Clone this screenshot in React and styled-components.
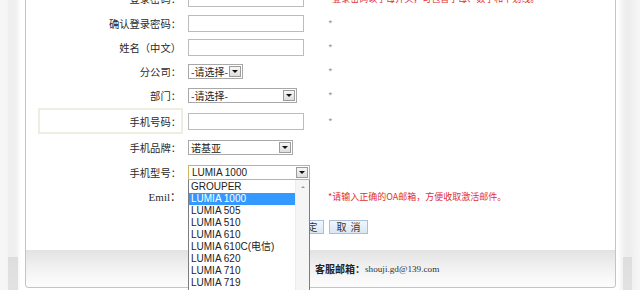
import React from 'react';
import styled, { createGlobalStyle, css } from 'styled-components';

const GlobalStyle = createGlobalStyle`
  html, body { margin: 0; padding: 0; background: #fff; }
  body { font-family: "Noto Sans CJK SC", "Liberation Sans", sans-serif; }
`;

const Page = styled.div`
  width: 640px;
  height: 290px;
  overflow: hidden;
  position: relative;
  background:
    linear-gradient(#dedede, #e2e2e2) 8px 257px / 10px 33px no-repeat,
    linear-gradient(#dedede, #e2e2e2) 623px 257px / 9px 33px no-repeat,
    linear-gradient(to right, #f6f6f6 0, #f6f6f6 7px, #eeeeee 9px, #f0f0f0 16px, #fff 21px, #fff 618px, #f3f3f3 622px, #ececec 628px, #f2f2f2 634px, #f7f7f7 640px);
`;

const Panel = styled.div`
  margin: -14px 0 0 25px;
  width: 589px;
  border: 1px solid #c4c4c4;
  border-top: none;
  border-radius: 0 0 4px 4px;
  background: #fff;
`;

const Form = styled.div`
  padding-left: 12px;
`;

const Row = styled.div`
  display: flex;
  align-items: center;
  height: ${p => p.$h || 24}px;
`;

const Label = styled.div`
  width: 145px;
  height: 26px;
  box-sizing: border-box;
  border: 2px solid transparent;
  display: flex;
  align-items: center;
  justify-content: flex-end;
  font-size: 10.3px;
  color: #2a2a2a;
  white-space: nowrap;
  ${p => p.$boxed && css`
    border-color: #eeeee0;
  `}
  ${p => p.$serif && css`
    font-family: "Liberation Serif", "Noto Sans CJK SC", serif;
    font-size: 11px;
  `}
`;

const Field = styled.div`
  width: 138px;
  box-sizing: border-box;
  padding-left: 5px;
  display: flex;
  align-items: center;
  position: relative;
`;

const Hint = styled.div`
  padding-left: 7px;
  font-size: ${p => (p.$red ? 9 : 10)}px;
  color: ${p => (p.$red ? '#e03030' : '#9a9a9a')};
  white-space: nowrap;
`;

const Input = styled.div`
  width: 116px;
  height: 17px;
  box-sizing: border-box;
  border: 1px solid #bcbcbc;
  background: #fff;
`;

const SelectBox = styled.div`
  width: ${p => p.$w}px;
  height: 15px;
  box-sizing: border-box;
  border: 1px solid ${p => (p.$focus ? '#d2b163' : '#a8a8a8')};
  background: #fff;
  display: flex;
  align-items: center;
  justify-content: space-between;
  padding-left: ${p => (p.$latin ? 3 : 2)}px;
  font-size: 10px;
  font-family: ${p => (p.$latin ? '"Liberation Sans", "Noto Sans CJK SC", sans-serif' : '"Noto Sans CJK SC", sans-serif')};
  color: #222;
  white-space: nowrap;
`;

const Arrow = styled.span`
  width: 12px;
  height: 11px;
  box-sizing: border-box;
  margin-right: 1px;
  border: 1px solid #9c9c9c;
  background: linear-gradient(#f6f6f6, #dedede);
  display: flex;
  align-items: center;
  justify-content: center;
  flex-shrink: 0;
  &::after {
    content: "";
    border-left: 3px solid transparent;
    border-right: 3px solid transparent;
    border-top: 3px solid #111;
  }
`;

const Select = ({ w, children, focus, latin }) => (
  <SelectBox $w={w} $focus={focus} $latin={latin}>
    <span>{children}</span>
    <Arrow />
  </SelectBox>
);

const List = styled.div`
  position: absolute;
  top: 100%;
  left: 5px;
  width: 122px;
  box-sizing: border-box;
  border: 1px solid #7d7d7d;
  border-top: none;
  background: #fff;
  display: flex;
  z-index: 10;
`;

const Items = styled.div`
  flex: 1;
  padding-top: 1px;
`;

const Item = styled.div`
  height: 12px;
  line-height: 12px;
  padding-left: 2px;
  font-family: "Liberation Sans", "Noto Sans CJK SC", sans-serif;
  font-size: 10px;
  color: #222;
  white-space: nowrap;
  ${p => p.$active && css`
    background: #3399ff;
    color: #fff;
  `}
`;

const Scroll = styled.div`
  width: 13px;
  background: #f5f5f5;
  border-left: 1px solid #ececec;
  display: flex;
  justify-content: center;
  padding-top: 6px;
  &::before {
    content: "";
    height: 0;
    border-left: 2px solid transparent;
    border-right: 2px solid transparent;
    border-bottom: 2px solid #9a9a9a;
  }
`;

const ButtonRow = styled.div`
  height: 42px;
  box-sizing: border-box;
  padding: 12px 0 0 249px;
  display: flex;
  gap: 5px;
  align-items: flex-start;
`;

const Button = styled.button`
  width: ${p => p.$w}px;
  height: 14px;
  padding: 0;
  border: 1px solid #a9bfd6;
  background: linear-gradient(#f1f6fc, #d9e6f3);
  font-family: "Noto Sans CJK SC", sans-serif;
  font-size: 10px;
  line-height: 12px;
  letter-spacing: 4px;
  text-indent: 4px;
  color: #333;
`;

const Footer = styled.div`
  height: 37px;
  box-sizing: border-box;
  border-radius: 0 0 4px 4px;
  background: linear-gradient(#e2e2e2, #efefef 40%, #f9f9f9 80%, #fcfcfc);
  display: flex;
  align-items: center;
  padding-left: 289px;
  font-size: 10px;
  color: #222;
`;

const FooterKey = styled.span`
  font-weight: bold;
`;

const FooterMail = styled.span`
  font-family: "Liberation Serif", serif;
  font-size: 9.2px;
  color: #333;
`;

const models = [
  'GROUPER', 'LUMIA 1000', 'LUMIA 505', 'LUMIA 510', 'LUMIA 610',
  'LUMIA 610C(电信)', 'LUMIA 620', 'LUMIA 710', 'LUMIA 719', 'LUMIA 720',
];

export default function App() {
  return (
    <Page>
      <GlobalStyle />
      <Panel>
        <Form>
          <Row $h={25}>
            <Label>登录密码：</Label>
            <Field><Input /></Field>
            <Hint $red>*登录密码以字母开头，可包含字母、数字和下划线。</Hint>
          </Row>
          <Row>
            <Label>确认登录密码：</Label>
            <Field><Input /></Field>
            <Hint>*</Hint>
          </Row>
          <Row>
            <Label>姓名（中文）</Label>
            <Field><Input /></Field>
            <Hint>*</Hint>
          </Row>
          <Row>
            <Label>分公司：</Label>
            <Field><Select w={55}>-请选择-</Select></Field>
            <Hint>*</Hint>
          </Row>
          <Row>
            <Label>部门：</Label>
            <Field><Select w={109}>-请选择-</Select></Field>
            <Hint>*</Hint>
          </Row>
          <Row $h={28}>
            <Label $boxed>手机号码：</Label>
            <Field><Input /></Field>
            <Hint>*</Hint>
          </Row>
          <Row $h={25}>
            <Label>手机品牌：</Label>
            <Field><Select w={105}>诺基亚</Select></Field>
          </Row>
          <Row>
            <Label>手机型号：</Label>
            <Field>
              <Select w={122} focus latin>LUMIA 1000</Select>
              <List>
                <Items>
                  {models.map((m, i) => (
                    <Item key={m} $active={i === 1}>{m}</Item>
                  ))}
                </Items>
                <Scroll />
              </List>
            </Field>
          </Row>
          <Row>
            <Label $serif>Emil：</Label>
            <Field><Input /></Field>
            <Hint $red>*请输入正确的OA邮箱，方便收取激活邮件。</Hint>
          </Row>
          <ButtonRow>
            <Button $w={37}>确定</Button>
            <Button $w={39}>取消</Button>
          </ButtonRow>
        </Form>
        <Footer>
          <FooterKey>客服邮箱：</FooterKey>
          <FooterMail>shouji.gd@139.com</FooterMail>
        </Footer>
      </Panel>
    </Page>
  );
}
